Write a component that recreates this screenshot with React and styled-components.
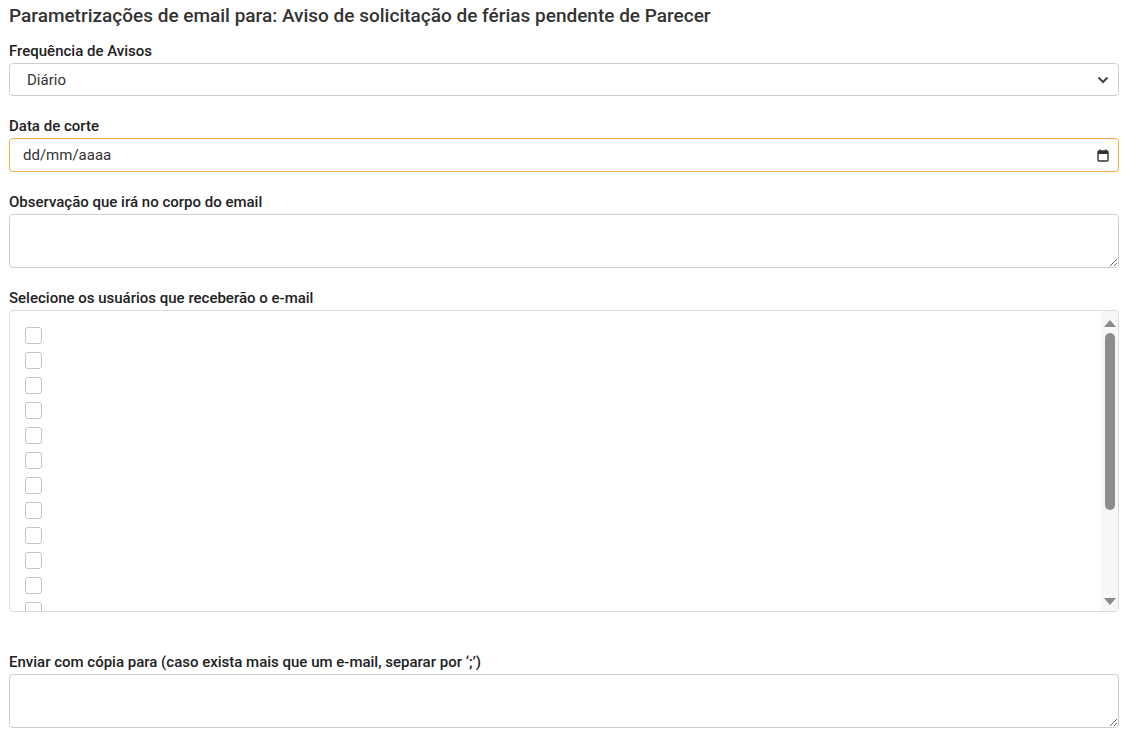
import React from 'react';
import styled, { createGlobalStyle } from 'styled-components';

const GlobalStyle = createGlobalStyle`
  html, body {
    margin: 0;
    padding: 0;
    background: #fff;
  }
  body {
    font-family: Roboto, "Liberation Sans", Arial, sans-serif;
    color: #333;
  }
  * {
    box-sizing: border-box;
  }
`;

const Page = styled.div`
  padding: 4px 19px 10px 9px;
`;

const Title = styled.h1`
  margin: 0 0 13px;
  font-size: 19px;
  line-height: 24px;
  font-weight: 500;
  color: #333;
`;

const Field = styled.div`
  display: flex;
  flex-direction: column;
  margin-bottom: ${(p) => p.$gap || 20}px;
`;

const Label = styled.label`
  font-size: 15px;
  line-height: 20px;
  font-weight: 500;
  color: #222;
  margin-bottom: 2px;
`;

const Box = styled.div`
  display: flex;
  align-items: center;
  height: ${(p) => p.$h || 33}px;
  border: 1px solid ${(p) => (p.$focus ? '#f0ad4e' : '#cfcfcf')};
  border-radius: 4px;
  background: #fff;
  padding: 0 9px 0 ${(p) => p.$indent}px;
  font-size: 15px;
  color: #333;
`;

const BoxText = styled.span`
  flex: 1;
`;

const TextArea = styled.textarea`
  display: block;
  width: 100%;
  height: 54px;
  border: 1px solid #cfcfcf;
  border-radius: 4px;
  padding: 6px 10px;
  font-family: inherit;
  font-size: 15px;
  color: #333;
  resize: vertical;
  outline: none;
`;

const ListBox = styled.div`
  display: flex;
  height: 302px;
  border: 1px solid #dcdcdc;
  border-radius: 4px;
  overflow: hidden;
  background: #fff;
`;

const Items = styled.div`
  flex: 1;
  overflow: hidden;
  padding: 16px 0 0 15px;
`;

const Item = styled.div`
  display: flex;
  align-items: center;
  height: 25px;
  gap: 8px;
`;

const Check = styled.span`
  width: 17px;
  height: 17px;
  border: 1px solid #c4c4c4;
  border-radius: 3px;
  background: #fff;
  margin-top: -8px;
`;

const Track = styled.div`
  width: 17px;
  display: flex;
  flex-direction: column;
  align-items: center;
  background: #f7f7f7;
  padding: 9px 0 6px;
`;

const Arrow = styled.span`
  width: 0;
  height: 0;
  border-left: 6px solid transparent;
  border-right: 6px solid transparent;
  ${(p) => (p.$down ? 'border-top' : 'border-bottom')}: 7px solid #8a8a8a;
`;

const Thumb = styled.div`
  width: 10px;
  height: 177px;
  margin: 6px 0 auto;
  border-radius: 5px;
  background: #8c8c8c;
`;

const Chevron = () => (
  <svg width="12" height="8" viewBox="0 0 12 8">
    <path d="M1.5 1.5 L6 6 L10.5 1.5" fill="none" stroke="#444" strokeWidth="2" />
  </svg>
);

const CalendarIcon = () => (
  <svg width="12" height="13" viewBox="0 0 12 13">
    <rect x="1" y="2" width="10" height="10" fill="none" stroke="#333" strokeWidth="1.4" rx="1" />
    <rect x="1" y="2" width="10" height="3" fill="#333" />
    <rect x="2.5" y="0.5" width="1.4" height="2.5" fill="#333" />
    <rect x="8.1" y="0.5" width="1.4" height="2.5" fill="#333" />
  </svg>
);

const users = Array.from({ length: 13 }, (_, i) => i);

export default function App() {
  return (
    <>
      <GlobalStyle />
      <Page>
        <Title>Parametrizações de email para: Aviso de solicitação de férias pendente de Parecer</Title>

        <Field>
          <Label>Frequência de Avisos</Label>
          <Box $indent={17}>
            <BoxText>Diário</BoxText>
            <Chevron />
          </Box>
        </Field>

        <Field>
          <Label>Data de corte</Label>
          <Box $indent={13} $h={34} $focus>
            <BoxText>dd/mm/aaaa</BoxText>
            <CalendarIcon />
          </Box>
        </Field>

        <Field>
          <Label>Observação que irá no corpo do email</Label>
          <TextArea />
        </Field>

        <Field $gap={40}>
          <Label>Selecione os usuários que receberão o e-mail</Label>
          <ListBox>
            <Items>
              {users.map((u) => (
                <Item key={u}>
                  <Check />
                </Item>
              ))}
            </Items>
            <Track>
              <Arrow />
              <Thumb />
              <Arrow $down />
            </Track>
          </ListBox>
        </Field>

        <Field>
          <Label>Enviar com cópia para (caso exista mais que um e-mail, separar por ‘;’)</Label>
          <TextArea />
        </Field>
      </Page>
    </>
  );
}
